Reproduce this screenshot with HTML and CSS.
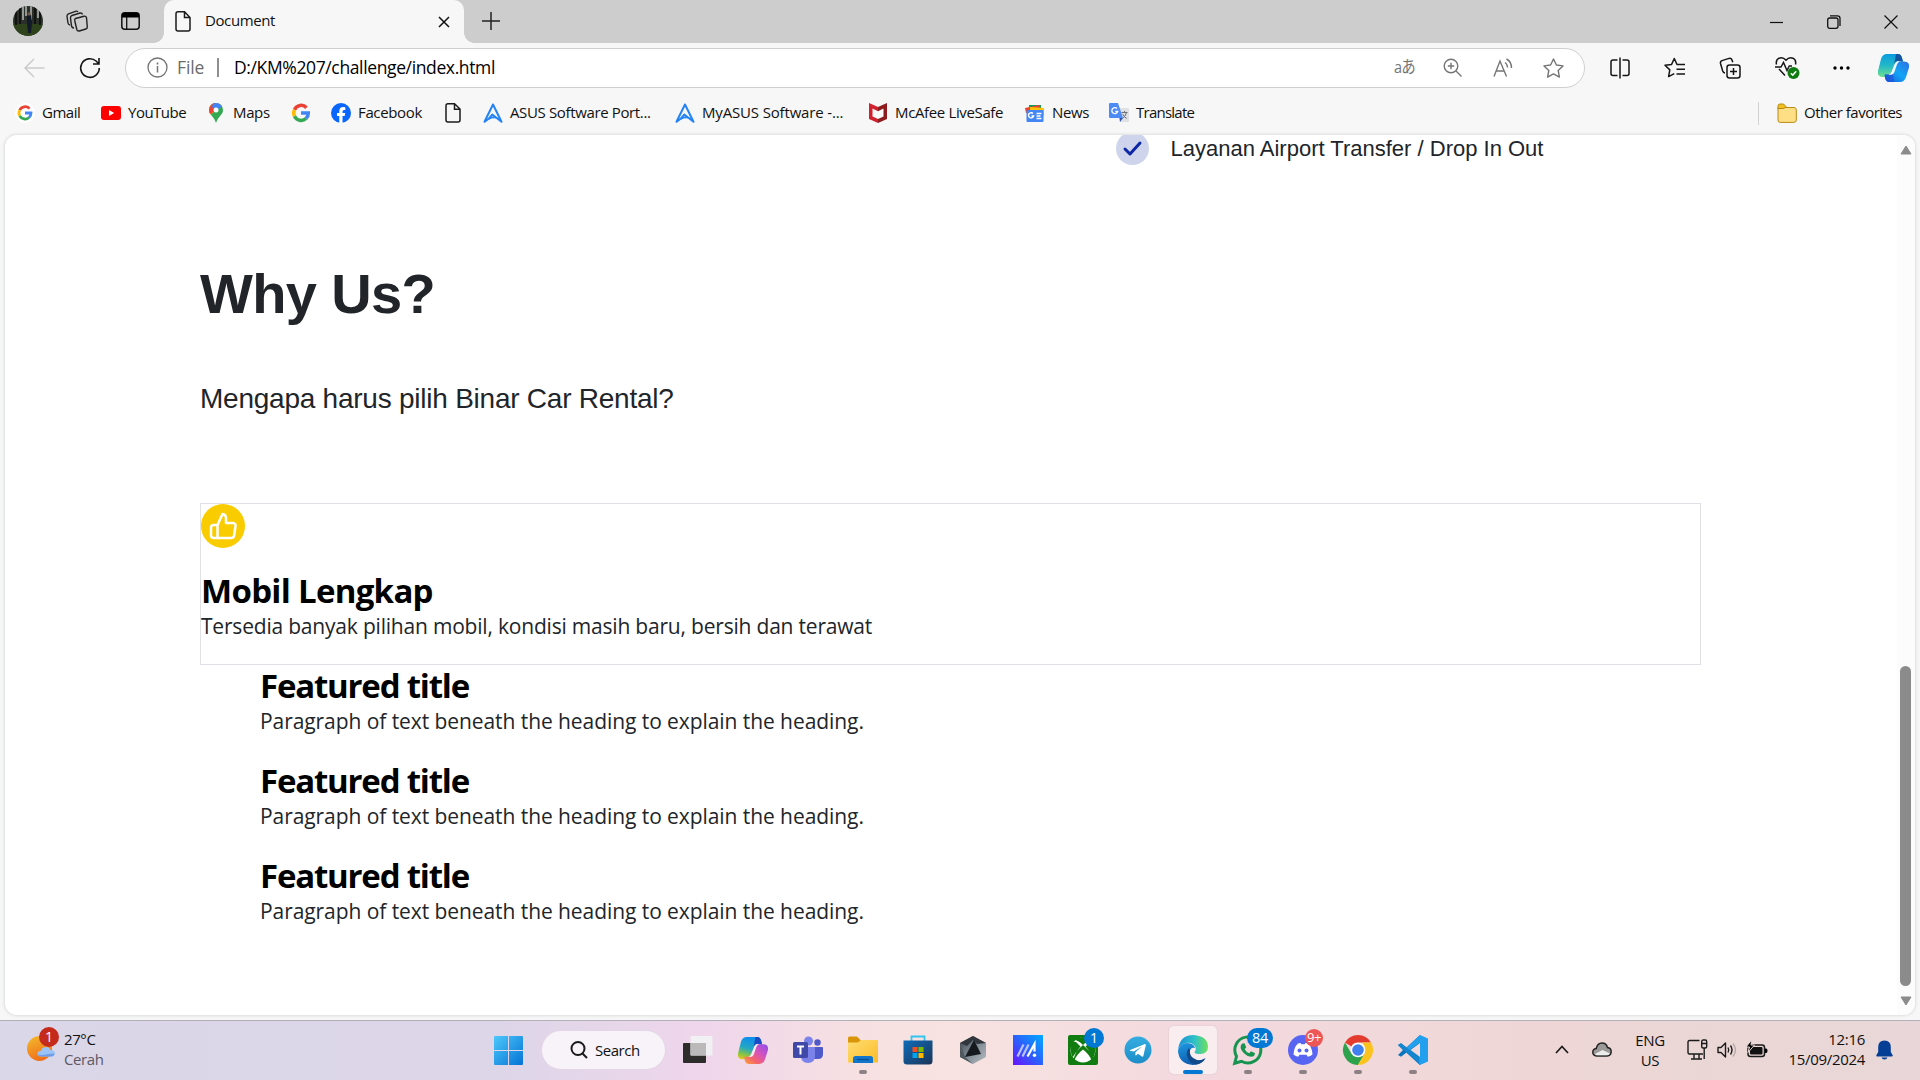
FILE: index.html
```html
<!DOCTYPE html>
<html lang="en">
<head>
<meta charset="utf-8">
<title>Document</title>
<link rel="stylesheet" href="styles.css">
</head>
<body>
<svg class="defs" width="0" height="0">
  <defs>
    <linearGradient id="cpA" x1="0" y1="0" x2="0" y2="1"><stop offset="0" stop-color="#0a9ce0"/><stop offset=".5" stop-color="#22b8c8"/><stop offset="1" stop-color="#6fe08c"/></linearGradient>
    <linearGradient id="cpB" x1="1" y1="0" x2="0" y2="1"><stop offset="0" stop-color="#2f6fe0"/><stop offset=".5" stop-color="#12a5f5"/><stop offset="1" stop-color="#1b54dc"/></linearGradient>
    <linearGradient id="cqA" x1=".3" y1="0" x2="0" y2="1"><stop offset="0" stop-color="#0f8fea"/><stop offset=".45" stop-color="#25a9c0"/><stop offset=".75" stop-color="#8bc53f"/><stop offset="1" stop-color="#f4c51d"/></linearGradient>
    <linearGradient id="cqB" x1="1" y1="0" x2="0" y2="1"><stop offset="0" stop-color="#8a4dec"/><stop offset=".4" stop-color="#d453c0"/><stop offset=".7" stop-color="#f5646b"/><stop offset="1" stop-color="#fba93a"/></linearGradient>
    <linearGradient id="winG" x1="0" y1="0" x2="1" y2="1"><stop offset="0" stop-color="#4cc8fb"/><stop offset="1" stop-color="#0573d5"/></linearGradient>
    <linearGradient id="sunG" x1="0" y1="0" x2=".4" y2="1"><stop offset="0" stop-color="#f3bd2c"/><stop offset="1" stop-color="#f0701a"/></linearGradient>
    <linearGradient id="folG" x1="0" y1="0" x2="1" y2="1"><stop offset="0" stop-color="#ffdd72"/><stop offset="1" stop-color="#fbbc28"/></linearGradient>
    <linearGradient id="stoG" x1="0" y1="0" x2="1" y2="1"><stop offset="0" stop-color="#0f6cb8"/><stop offset="1" stop-color="#1b3458"/></linearGradient>
    <linearGradient id="asuG" x1="0" y1="1" x2="1" y2="0"><stop offset="0" stop-color="#6a12ff"/><stop offset=".5" stop-color="#2b62ff"/><stop offset="1" stop-color="#00aaff"/></linearGradient>
    <linearGradient id="telG" x1="0" y1="0" x2="0" y2="1"><stop offset="0" stop-color="#36ade1"/><stop offset="1" stop-color="#1c8dc8"/></linearGradient>
    <linearGradient id="edG1" x1="0" y1="0" x2="1" y2="0"><stop offset="0" stop-color="#1b8fd6"/><stop offset=".55" stop-color="#2fc0c8"/><stop offset="1" stop-color="#6fe05a"/></linearGradient>
    <linearGradient id="edG2" x1="0" y1="0" x2=".4" y2="1"><stop offset="0" stop-color="#1e9ae2"/><stop offset="1" stop-color="#0f5cae"/></linearGradient>
    <linearGradient id="hexG" x1="0" y1="0" x2="1" y2="1"><stop offset="0" stop-color="#3a4148"/><stop offset=".5" stop-color="#7f8a93"/><stop offset="1" stop-color="#b9bfc4"/></linearGradient>
  </defs>
</svg>

<div class="screen">
  <header class="titlebar">
    <div class="title-left">
      <svg class="avatar" width="30" height="30" viewBox="0 0 30 30"><clipPath id="av"><circle cx="15" cy="15" r="15"/></clipPath><g clip-path="url(#av)"><rect width="30" height="30" fill="#2b2f29"/><path d="M0 18h30v12H0z" fill="#2e431b"/><path d="M3 0v19M7 2v16M22 0v18M27 2v17" stroke="#11130f" stroke-width="2"/><path d="M10 0v14M13 0v10M18 0v14M25 0v12" stroke="#b9bdb9" stroke-width="1.500"/><path d="M14 9h4l1 8-1 10h-3l-1-10z" fill="#111a26"/><circle cx="16" cy="8" r="1.700" fill="#6e5747"/></g></svg>
      <svg class="workspaces" width="22" height="22" viewBox="0 0 22 22" fill="none" stroke="#222" stroke-width="1.400"><path d="M9.500 8.500l8.500-2.300q2-.4 2.500 1.500l.8 9q.1 1.800-1.500 2.300l-6.500 2q-2 .4-2.500-1.500L8.800 11Q8.300 9 9.500 8.500z"/><path d="M8 18q-2 0-2.500-2L4.500 8q-.2-2 1.500-2.500l8-2.500q2-.3 2.500 1.500M4 15q-1.700-.3-2-2L1 6.500Q.8 4.500 2.500 3.800l7-2.500Q11 .8 12 1.800"/></svg>
      <svg class="tabactions" width="19" height="18" viewBox="0 0 19 18"><rect x=".8" y=".8" width="17.400" height="16.400" rx="3" fill="none" stroke="#111" stroke-width="1.500"/><path d="M1 5.500V3q0-2.300 2.500-2.300h12Q18 .7 18 3v2.500z"/><path d="M5.700 5v12" stroke="#111" stroke-width="1.300"/></svg>
    </div>
    <div class="tab">
      <svg width="16" height="21" viewBox="0 0 16 21" fill="none" stroke="#1b1b1b" stroke-width="1.500"><path d="M3 .8h6.500L15 6.500V18q0 2-2 2H3q-2 0-2-2V2.800q0-2 2-2zM9.500 1v5.500H15"/></svg>
      <span class="tab-name">Document</span>
      <svg width="12" height="12" viewBox="0 0 12 12" stroke="#111" stroke-width="1.500"><path d="M1 1l10 10M11 1L1 11"/></svg>
    </div>
    <svg class="newtab" width="18" height="18" viewBox="0 0 18 18" stroke="#222" stroke-width="1.500"><path d="M9 0v18M0 9h18"/></svg>
    <div class="wincontrols">
      <svg width="14" height="14" viewBox="0 0 14 14" stroke="#111" stroke-width="1.200"><path d="M0 7.500h13"/></svg>
      <svg width="14" height="14" viewBox="0 0 14 14" fill="none" stroke="#111" stroke-width="1.300"><rect x=".7" y="3" width="10.300" height="10.300" rx="2"/><path d="M3 .8h7.500Q13 .8 13 3.300V11"/></svg>
      <svg width="14" height="14" viewBox="0 0 14 14" stroke="#111" stroke-width="1.200"><path d="M.5.500l13 13M13.500.500l-13 13"/></svg>
    </div>
  </header>

  <div class="toolbar">
    <svg class="back" width="21" height="20" viewBox="0 0 21 20" fill="none" stroke="#cbcbcb" stroke-width="1.500"><path d="M20.500 10H1.500M10 1L1 10l9 9"/></svg>
    <svg class="reload" width="22" height="22" viewBox="0 0 22 22" fill="none" stroke="#161616" stroke-width="1.600"><path d="M20.300 11a9.300 9.300 0 1 1-3.200-7l2.600 2.700M20 1v6h-6"/></svg>
    <div class="address">
      <svg width="21" height="21" viewBox="0 0 21 21" fill="none" stroke="#757575" stroke-width="1.300"><circle cx="10.500" cy="10.500" r="9.500"/><path d="M10.500 9v6.500" stroke-width="1.500"/><path d="M10.500 5.500v2" stroke-width="1.700"/></svg>
      <span class="scheme">File</span>
      <span class="bar"></span>
      <span class="url">D:/KM%207/challenge/index.html</span>
      <div class="address-icons">
        <span class="translate-ic">aあ</span>
        <svg width="20" height="20" viewBox="0 0 20 20" fill="none" stroke="#757575" stroke-width="1.400"><circle cx="8" cy="8" r="6.800"/><path d="M13 13l5.500 5.500M8 4.800v6.400M4.800 8h6.400"/></svg>
        <svg width="20" height="20" viewBox="0 0 20 20" fill="none" stroke="#757575" stroke-width="1.400"><path d="M1 18.500L7 3l6.500 15.500M3.300 13h8M12 4.500q2.300 1.300 2.500 5M13.500 1q5 2.500 5 9"/></svg>
        <svg width="21" height="20" viewBox="0 0 21 20" fill="none" stroke="#757575" stroke-width="1.400" stroke-linejoin="round"><path d="M10.500 1l2.900 6 6.600.9-4.800 4.600 1.200 6.600-5.900-3.200-5.900 3.200 1.200-6.600L1 7.900 7.600 7z"/></svg>
      </div>
    </div>
    <div class="tools">
      <svg width="20" height="22" viewBox="0 0 20 22" fill="none" stroke="#161616" stroke-width="1.500"><path d="M10 .5v21M7.500 3H3Q1 3 1 5v11.500q0 2 2 2h4.500M12.500 3H17q2 0 2 2v11.500q0 2-2 2h-4.500"/></svg>
      <svg width="22" height="22" viewBox="0 0 22 22" fill="none" stroke="#161616" stroke-width="1.500" stroke-linejoin="round"><path d="M14 7.500h-1L10.300 1.500 7.600 7.400 1 8.300l4.800 4.600-1.200 6.700 5.700-3M13.500 7.500H21M12.500 12.300H21M12.500 17H21"/></svg>
      <svg width="22" height="22" viewBox="0 0 22 22" fill="none" stroke="#161616" stroke-width="1.500"><rect x="8" y="8" width="13" height="13" rx="2.500"/><path d="M14.500 11v7M11 14.500h7M6 16q-1.700-.2-2.300-2L1.500 6.500Q1 4.300 3 3.600l7-2.200q2.300-.5 3 1.600l.8 2.300"/></svg>
      <svg width="25" height="24" viewBox="0 0 25 24" fill="none" stroke="#161616" stroke-width="1.500"><path d="M1.500 8.500q-1-4.500 2.500-6.300 4-1.600 7 2 3-3.600 7-2 3.500 1.800 2.500 6.300M4 13l6 6.500M0 11h6l2.500-4.500 3.500 8 2.300-4.500H17"/><circle cx="18.500" cy="17" r="6" fill="#0f7b10" stroke="none"/><path d="M15.800 17.200l2 1.900 3.400-3.800" stroke="#fff"/></svg>
      <svg width="17" height="4" viewBox="0 0 17 4"><circle cx="2" cy="2" r="1.700"/><circle cx="8.500" cy="2" r="1.700"/><circle cx="15" cy="2" r="1.700"/></svg>
      <svg width="31" height="28" viewBox="0 0 31 28"><path d="M9 0h11q3 0 4 4l1 3h-4q-3 0-4 4l-3 9q-1 3-4 3H5q-6 0-5-6L3 5q1.500-5 6-5z" fill="url(#cpA)"/><path d="M18 0h2q3 0 4 4l1 4-5-1q-3 0-4 4z" fill="#15559f"/><path d="M22 28H11q-3 0-4-4l-.5-3.500H10q3 0 4-4l3-6q1-3 4-3h5q6 0 5 6l-3 9.500q-1.500 5-6 5z" fill="url(#cpB)"/><path d="M7 20.500h3q3 0 4-4l.5-1.500L16 28h-5q-3 0-4-4z" fill="#1c50d6" opacity=".6"/><path d="M18.300 8q1.500-1 3.200-.5-2 1-2.700 3.500l-2.600 7.500q-.7 2-3 2.300h-2.700q2.300-.8 3.200-3.500l2.600-6.500q.7-2 2-2.800z" fill="#f4f9fb"/></svg>
    </div>
  </div>

  <nav class="bookmarks">
    <a class="bm w-gmail"><svg width="20" height="20" viewBox="0 0 20 20"><circle cx="10" cy="10" r="10" fill="#fff"/><g fill="none" stroke-width="2.800"><path d="M14.500 5.600A6 6 0 0 0 4.700 7.200" stroke="#ea4335"/><path d="M4.700 7.200a6 6 0 0 0 0 5.600" stroke="#fbbc05"/><path d="M4.700 12.800a6 6 0 0 0 9.300 1.700" stroke="#34a853"/><path d="M14 14.500a6 6 0 0 0 2-4.500h-6" stroke="#4285f4"/></g></svg><span class="tight">Gmail</span></a>
    <a class="bm w-yt"><svg width="20" height="20" viewBox="0 0 20 20"><rect y="3" width="20" height="14" rx="3" fill="#f00"/><path d="M8 7l5.200 3L8 13z" fill="#fff"/></svg><span class="tight">YouTube</span></a>
    <a class="bm w-maps"><svg width="20" height="20" viewBox="0 0 20 20"><clipPath id="pin"><path d="M10 0a6.800 6.800 0 0 1 7 7c0 5-5 6-7 13C8 13 3 12 3 7a6.800 6.800 0 0 1 7-7z"/></clipPath><g clip-path="url(#pin)"><path d="M0 0h20v20H0z" fill="#34a853"/><path d="M2 14L18 0H0v14z" fill="#fbbc04"/><path d="M0 0h10v7L5 11 0 9z" fill="#ea4335"/><path d="M7 0h13L10 8 6 4z" fill="#4285f4"/></g><circle cx="10" cy="7" r="2.500" fill="#fff"/></svg><span>Maps</span></a>
    <a class="bm w-g"><svg width="20" height="20" viewBox="0 0 20 20" fill="none" stroke-width="3.500"><path d="M15.500 4.700A7.300 7.300 0 0 0 3.500 6.700" stroke="#ea4335"/><path d="M3.500 6.700a7.300 7.300 0 0 0 0 6.600" stroke="#fbbc05"/><path d="M3.500 13.300a7.300 7.300 0 0 0 11.500 2.200" stroke="#34a853"/><path d="M15 15.500a7.300 7.300 0 0 0 2.300-5.500H10" stroke="#4285f4"/></svg></a>
    <a class="bm w-fb"><svg width="20" height="20" viewBox="0 0 20 20"><circle cx="10" cy="10" r="10" fill="#0866ff"/><path d="M8.300 20v-7H6v-3h2.300V8.300Q8.300 4 12.300 4q1 0 2 .2V7h-1.300q-1.500 0-1.500 1.500V10h2.700l-.5 3h-2.200v7z" fill="#fff"/></svg><span>Facebook</span></a>
    <a class="bm w-file"><svg width="20" height="20" viewBox="0 0 16 20" fill="none" stroke="#1b1b1b" stroke-width="1.500"><path d="M3 .8h6.500L15 6v11q0 2-2 2H3q-2 0-2-2V2.800q0-2 2-2zM9.500 1v5.200H15"/></svg></a>
    <a class="bm w-asus"><svg width="20" height="20" viewBox="0 0 20 20" fill="none" stroke="#2583f5" stroke-width="2" stroke-linejoin="round"><path d="M10 1.500L1.500 18.800q5-2.800 7.800-7.300l9.200 7.300z"/><path d="M5.500 15.800q4.500-2.300 7.500-1.200"/></svg><span>ASUS Software Port...</span></a>
    <a class="bm w-myasus"><svg width="20" height="20" viewBox="0 0 20 20" fill="none" stroke="#2583f5" stroke-width="2" stroke-linejoin="round"><path d="M10 1.500L1.500 18.800q5-2.800 7.800-7.300l9.200 7.300z"/><path d="M5.500 15.800q4.500-2.300 7.500-1.200"/></svg><span class="loose">MyASUS Software -...</span></a>
    <a class="bm w-mcafee"><svg width="20" height="20" viewBox="0 0 20 20"><path d="M1 0l9 4v16l-9-4z" fill="#d2202f"/><path d="M19 0l-9 4v16l9-4z" fill="#8e1b1e"/><path d="M4.500 5.500L10 8.200l5.500-2.700v8L10 16l-5.500-2.500z" fill="#fafafa"/></svg><span>McAfee LiveSafe</span></a>
    <a class="bm w-news"><svg width="20" height="20" viewBox="0 0 20 20"><path d="M4 2h12v8H4z" fill="#0c9d58"/><path d="M0 5l14-3 2 8H1z" fill="#ea4335"/><path d="M5 4l14 1v8H5z" fill="#ffc107"/><rect x="1.500" y="7" width="17" height="12" rx="1" fill="#4285f4"/><path d="M8 10.500a2.600 2.600 0 1 0 .6 2.500H6.500M11.500 10.500h5M11.500 13h4M11.500 15.500h5" fill="none" stroke="#fff" stroke-width="1.400"/></svg><span>News</span></a>
    <a class="bm w-tr"><svg width="20" height="20" viewBox="0 0 20 20"><path d="M8 5h11q1 0 1 1v12q0 1-1 1h-8z" fill="#dfe1e5"/><path d="M1 0h8l5 15H1q-1 0-1-1V1q0-1 1-1z" fill="#4c8bf5"/><path d="M10.500 15H14l-3 4z" fill="#3155b5"/><path d="M8 5.500a3 3 0 1 0 .7 3H6.300" fill="none" stroke="#fff" stroke-width="1.300"/><path d="M12.500 9.500h6M15.500 8v1.500M17.500 9.500q-1 4-4 6M13.700 11q1.500 3 4 4.500" fill="none" stroke="#6b7076"/></svg><span class="tighter">Translate</span></a>
    <a class="bm other"><svg width="20" height="20" viewBox="0 0 20 20" stroke="#b98a12"><path d="M1 4.500h16q2.300 0 2.300 2.500v10q0 2.400-2.500 2.400H3.200Q1 19.400 1 17z" fill="#ffdf85"/><path d="M1 6V3Q1 1 3 1h3.500L9 3.500q-1 2-3 2H1z" fill="#f0c020"/></svg><span class="tight">Other favorites</span></a>
  </nav>

  <main class="page">
    <div class="content">
      <div class="service">
        <svg width="33" height="33" viewBox="0 0 33 33"><circle cx="16.500" cy="16.500" r="16.500" fill="#cfd4ed"/><path d="M9 17l5 5 10-11" fill="none" stroke="#0d28a6" stroke-width="3" stroke-linecap="round" stroke-linejoin="round"/></svg>
        <span>Layanan Airport Transfer / Drop In Out</span>
      </div>
      <h1 class="why">Why Us?</h1>
      <p class="lead">Mengapa harus pilih Binar Car Rental?</p>
      <section class="card">
        <svg width="44" height="44" viewBox="0 0 44 44"><circle cx="22" cy="22" r="22" fill="#f9cc00"/><path d="M16.500 21l5-11q3.500.5 3.500 4v5h7q3 .3 2.500 3.200l-1.400 9.300q-.4 2.500-3 2.500H16.500zm0 13H12.800Q10 34 10 31.300V23.700Q10 21 12.800 21h3.700" fill="none" stroke="#fff" stroke-width="2.500" stroke-linejoin="round"/></svg>
        <h3 class="card-title">Mobil Lengkap</h3>
        <p class="card-text">Tersedia banyak pilihan mobil, kondisi masih baru, bersih dan terawat</p>
      </section>
      <section class="feature"><h3>Featured title</h3><p>Paragraph of text beneath the heading to explain the heading.</p></section>
      <section class="feature"><h3>Featured title</h3><p>Paragraph of text beneath the heading to explain the heading.</p></section>
      <section class="feature"><h3>Featured title</h3><p>Paragraph of text beneath the heading to explain the heading.</p></section>
    </div>
    <div class="scrollbar">
      <svg width="12" height="10" viewBox="0 0 12 10"><path d="M6 1l5 8H1z" fill="#8b8b8b" stroke="#8b8b8b" stroke-linejoin="round"/></svg>
      <div class="thumb"></div>
      <svg width="12" height="10" viewBox="0 0 12 10"><path d="M6 9l5-8H1z" fill="#8b8b8b" stroke="#8b8b8b" stroke-linejoin="round"/></svg>
    </div>
  </main>

  <footer class="taskbar">
    <div class="weather">
      <div class="weather-ic">
        <svg width="28" height="26" viewBox="0 0 28 26"><circle cx="12.500" cy="12.500" r="12.500" fill="url(#sunG)"/><path d="M14 20.500q-4-.3-3.500-3.300.5-2.500 3.500-2.500 1-3.700 5-3.700 3.500 0 4.500 3 4 0 4.500 3 .2 3-3.500 3.500z" fill="#9cc3f7"/><path d="M11 18q2 1.500 6 .8t10.500-1.300q-.3 2.500-3 3H14q-2.500-.2-3-2.500z" fill="#6f9de8"/></svg>
        <span class="badge red">1</span>
      </div>
      <div class="weather-text"><span>27°C</span><span class="dim">Cerah</span></div>
    </div>
    <div class="apps">
      <div class="app start"><svg width="29" height="29" viewBox="0 0 29 29" fill="url(#winG)"><path d="M1 0h13v14H0V1q0-1 1-1zM15 0h13q1 0 1 1v13H15zM0 15h14v14H1q-1 0-1-1zM15 15h14v13q0 1-1 1H15z"/></svg></div>
      <div class="search"><svg width="18" height="18" viewBox="0 0 18 18" fill="none" stroke="#1b1b1b" stroke-width="2"><circle cx="8" cy="7.500" r="6.500"/><path d="M12.500 12.500L17 17"/></svg><span>Search</span></div>
      <div class="app"><svg width="30" height="30" viewBox="0 0 30 30"><rect y="8" width="23" height="20" rx="1" fill="#2e2c2b"/><rect x="7.500" y="1" width="22" height="19.500" rx="1" fill="#f1f0f2"/><path d="M7.500 8H23v12.500H7.500z" fill="#bcb9bb"/></svg></div>
      <div class="app"><svg width="30" height="27" viewBox="0 0 31 28"><path d="M9 0h11q3 0 4 4l1 3h-4q-3 0-4 4l-3 9q-1 3-4 3H5q-6 0-5-6L3 5q1.500-5 6-5z" fill="url(#cqA)"/><path d="M18 0h2q3 0 4 4l1 4-5-1q-3 0-4 4z" fill="#1a4bc4"/><path d="M22 28H11q-3 0-4-4l-.5-3.500H10q3 0 4-4l3-6q1-3 4-3h5q6 0 5 6l-3 9.500q-1.500 5-6 5z" fill="url(#cqB)"/><path d="M18.300 8q1.500-1 3.200-.5-2 1-2.700 3.500l-2.600 7.500q-.7 2-3 2.300h-2.700q2.300-.8 3.200-3.500l2.600-6.500q.7-2 2-2.800z" fill="#f6eaf5"/></svg></div>
      <div class="app"><svg width="30" height="28" viewBox="0 0 30 28"><circle cx="15.500" cy="5" r="4.500" fill="#7b83eb"/><circle cx="24.500" cy="6.500" r="3.200" fill="#5059c9"/><path d="M20 11h9q1 0 1 1v6q0 5-5 5h-5z" fill="#5059c9"/><path d="M8 11h14v9q0 7-7 7t-7-7z" fill="#7b83eb"/><rect y="6" width="15" height="16" rx="1.500" fill="#4149a8"/><path d="M4 10.500h7M7.500 10.500v8" stroke="#fff" stroke-width="2"/></svg></div>
      <div class="app"><svg width="30" height="28" viewBox="0 0 30 28"><path d="M0 2q0-1.500 1.500-1.500H9L12.500 4 29 4.500V14H0z" fill="#d9960a"/><path d="M0 6.500h10L13 4h16q1 0 1 1v21.500H0z" fill="url(#folG)"/><path d="M5 27v-4.500q0-2.500 2.500-2.500h15q2.500 0 2.500 2.500V27z" fill="#1276cc"/><path d="M9 23.500h12" stroke="#0b4f92" stroke-width="1.300"/></svg><i class="run"></i></div>
      <div class="app"><svg width="30" height="30" viewBox="0 0 30 30"><path d="M8.500 6V1.500h13V6" fill="none" stroke="#32c5f2" stroke-width="1.800"/><path d="M.5 5.500h29V26q0 3.500-3.500 3.500H4Q.5 29.500.5 26z" fill="url(#stoG)"/><path d="M9.500 12h5v5h-5z" fill="#f25022"/><path d="M15.500 12h5v5h-5z" fill="#7fba00"/><path d="M9.500 18h5v5h-5z" fill="#00a4ef"/><path d="M15.500 18h5v5h-5z" fill="#ffb900"/></svg></div>
      <div class="app"><svg width="28" height="30" viewBox="0 0 28 30"><path d="M14 1l13 7v14l-13 7L1 22V8z" fill="url(#hexG)"/><path d="M14 1l13 7-9 1-4-4-6 6-7-3z" fill="#30363c"/><path d="M15 5l7 14-16 3z" fill="#16191d"/><path d="M1 8l5 14 8 7-13-7z" fill="#4f575f"/></svg></div>
      <div class="app"><svg width="30" height="30" viewBox="0 0 30 30"><path d="M0 0h30v30H0z" fill="url(#asuG)"/><path d="M4.500 21.500L10.500 9.500M9.500 21.500l6-12" fill="none" stroke="#b9c2ff" stroke-width="2.200"/><path d="M14.500 21.500l7-12.500v7.500" fill="none" stroke="#fff" stroke-width="2.200"/><circle cx="21.500" cy="20.300" r="1.700" fill="#fff"/></svg></div>
      <div class="app"><svg width="30" height="30" viewBox="0 0 30 30"><rect width="30" height="30" rx="2" fill="#107c10"/><circle cx="15" cy="15" r="12.500" fill="#fff"/><path d="M6 5q4 0 9 5 5-5 9-5-4-3-9-3T6 5zM5.500 24Q8 16 12.500 11.500L8 7l-3-.5Q2 10 2.500 15T5.500 24zM24.500 24Q22 16 17.500 11.500L22 7l3-.5q3 3.500 2.500 8.500T24.500 24zM15 10q8 7 11 14l-2 2Q21 19 15 14.500 9 19 6 26l-2-2Q7 17 15 10z" fill="#107c10"/></svg><span class="badge blue one">1</span></div>
      <div class="app"><svg width="28" height="28" viewBox="0 0 28 28"><circle cx="14" cy="14" r="13.500" fill="url(#telG)"/><path d="M6 14l15-6q1 0 .8 1.200L19.300 20q-.4 1-1.400.5L14 17.700l-2 1.800-.6-.3v-3l6.400-5.700-8 5L6 14.800q-.6-.4 0-.8z" fill="#fff"/></svg></div>
      <div class="app active"><svg width="30" height="30" viewBox="0 0 30 30"><path d="M0 16Q1 0 15.500 0 30 1 30 12q-.5 7-7.500 7-6 0-6-2 2-2 1-5Q14 7 8 8 1 9.500 0 16z" fill="url(#edG1)"/><path d="M0 16q2-8 9-8 7 .5 8 5-5-1-5.500 5 1 7 8 7.500 4 0 8-2.500Q23 30 15 30 1 29 0 16z" fill="url(#edG2)"/><path d="M11 13q-3 3-2 8 2 7.500 9 8.500 6-.5 9.500-6-4 2.500-8.500 1.500Q10.500 22 12 15z" fill="#114a8b"/></svg><i class="run current"></i></div>
      <div class="app"><svg width="30" height="30" viewBox="0 0 30 30" fill="none" stroke="#17944f"><path d="M1.700 28.300l1.800-7a13 13 0 1 1 5 5z" stroke-width="3"/><path d="M9.500 8.500l2-.3 1.700 4-1.500 2q1.500 3 4.600 4l1.700-2 4 2q-.3 3.500-4 3.500-4-.3-7-3.500-4-4-3.300-7 .3-2 1.800-2.700z" fill="#17944f" stroke="none"/></svg><i class="run"></i><span class="badge blue two">84</span></div>
      <div class="app"><svg width="30" height="30" viewBox="0 0 30 30"><circle cx="15" cy="15" r="15" fill="#5865f2"/><path d="M10 8.500l2.500-.5.800 1.300h3.400l.8-1.300 2.500.5q4 3.500 4.500 11-2 1.800-4.700 2.300l-1.300-2h-7l-1.300 2q-2.700-.5-4.700-2.300.5-7.500 4.500-11z" fill="#fff"/><circle cx="11.500" cy="15.500" r="2" fill="#5865f2"/><circle cx="18.500" cy="15.500" r="2" fill="#5865f2"/></svg><i class="run"></i><span class="badge coral">9+</span></div>
      <div class="app"><svg width="30" height="30" viewBox="0 0 30 30"><path d="M2 7.500a15 15 0 0 1 26 0H15q-5 0-6.500 4z" fill="#e33b2e"/><path d="M2 7.500A15 15 0 0 0 15 30l6.500-11.300Q15 24 8.500 18.700z" fill="#2da14c"/><path d="M28 7.500A15 15 0 0 1 15 30l6.500-11.300Q23.500 12 19 7.500z" fill="#fcc31e"/><circle cx="15" cy="15" r="7.300" fill="#fff"/><circle cx="15" cy="15" r="5.800" fill="#3f7ff0"/></svg><i class="run"></i></div>
      <div class="app"><svg width="30" height="30" viewBox="0 0 30 30"><path d="M22 0L8.500 12.500 3 8.300 0 10l5 5-5 5 3 1.700 5.500-4.200L22 30z" fill="#0b74bd"/><path d="M0 10l3-1.700L22 22.500V30z" fill="#1486cf"/><path d="M22 0l8 3.500v23L22 30l-.8-.5V8L11.500 15l-3-2.500z" fill="#22a0ee"/><path d="M22 8v14l-9.500-7z" fill="#f0dadd"/></svg><i class="run"></i></div>
    </div>
    <div class="tray">
      <svg class="chev" width="14" height="9" viewBox="0 0 14 9" fill="none" stroke="#1b1b1b" stroke-width="1.700"><path d="M1 8l6-6.500L13 8"/></svg>
      <svg class="cloud" width="20" height="15" viewBox="0 0 20 15"><path d="M4.500 14Q.8 13.600.8 10.300.8 7 4.200 6.500 5.500 1 10 1q4.300 0 5.500 4.500 3.700.5 3.700 4.300-.2 3.900-4 4.200z" fill="#9c9999" stroke="#242424" stroke-width="1.500"/><path d="M3 12l7.500-4 7.500 3.500q-1 1.800-3 1.800H5q-1.500 0-2-1.300z" fill="#ededed"/></svg>
      <div class="lang"><span>ENG</span><span>US</span></div>
      <svg class="net" width="21" height="21" viewBox="0 0 21 21" fill="none" stroke="#1b1b1b" stroke-width="1.400"><path d="M12.500 1.500H2.500Q1 1.500 1 3v10.500Q1 15 2.500 15H16M7 15v4.500M12 15v4.500M4 20h11"/><rect x="14.700" y="1" width="5" height="8" rx="1.500"/><path d="M14.700 4.500h5M17.200 9v11"/></svg>
      <svg class="vol" width="21" height="18" viewBox="0 0 21 18" fill="none" stroke="#1b1b1b" stroke-width="1.400"><path d="M1 6.500h3L8.500 2v14L4 11.500H1z" stroke-linejoin="round"/><path d="M11 6.500q1.500 2.500 0 5M13.500 4.500q3 4.500 0 9"/><path d="M16 2.500q5 6.500 0 13" stroke="#b8a9a9"/></svg>
      <svg class="bat" width="21" height="17" viewBox="0 0 21 17"><rect x="1" y="4" width="16.500" height="11.500" rx="2.500" fill="none" stroke="#1b1b1b" stroke-width="1.500"/><rect x="3" y="6" width="12.500" height="7.500" rx="1" fill="#111"/><path d="M18 7.500h1q1.500 0 1.500 2.200T19 12h-1z"/><path d="M4.500-1L-1 6h3.500L1 11.500 7.500 4H4z" stroke="#ecd8d8"/></svg>
      <div class="clock"><span>12:16</span><span>15/09/2024</span></div>
      <svg class="bell" width="17" height="20" viewBox="0 0 17 20" fill="#043f95"><path d="M8.500.5q6.300.3 6.300 6.500v5l1.900 3.300q.3 1-.7 1.200H1q-1-.2-.7-1.200L2.200 12V7Q2.200.8 8.500.5zM5.500 17.500h6q-.7 2-3 2t-3-2z"/></svg>
    </div>
  </footer>
</div>
</body>
</html>
```

FILE: styles.css
```css
* { box-sizing: border-box; }
body { margin: 0; font-family: "Open Sans", "Noto Sans", sans-serif; color: #111; }
h1, h3, p { margin: 0; }
svg { display: block; flex: none; overflow: visible; }
.defs { position: absolute; }
.screen { width: 1920px; height: 1080px; overflow: hidden; display: flex; flex-direction: column; background: #f7f7f7; }

.titlebar { height: 43px; flex: none; display: flex; align-items: center; background: #cdcdcd; }
.title-left { width: 164px; display: flex; align-items: center; padding-left: 13px; height: 43px; }
.title-left svg { margin-bottom: 1px; }
.workspaces { margin-left: 23px; }
.tabactions { margin-left: 33px; }
.tab { width: 300px; height: 43px; padding: 0 14px 0 11px; display: flex; align-items: center; background: #f7f7f7; border-radius: 10px 10px 0 0; position: relative; }
.tab::before, .tab::after { content: ""; position: absolute; bottom: 0; width: 10px; height: 10px; }
.tab::before { left: -10px; background: radial-gradient(circle at 0 0, #cdcdcd 9.5px, #f7f7f7 10px); }
.tab::after { right: -10px; background: radial-gradient(circle at 100% 0, #cdcdcd 9.5px, #f7f7f7 10px); }
.tab-name { flex: 1; margin: 0 0 4px 14px; font-size: 15px; line-height: 20px; letter-spacing: -.4px; }
.newtab { margin: 0 0 2px 18px; }
.wincontrols { margin-left: auto; padding-right: 22px; display: flex; gap: 43px; }

.toolbar { height: 49px; flex: none; display: flex; align-items: center; padding-left: 24px; }
.reload { margin-left: 34px; }
.address { margin-left: 24px; width: 1460px; height: 40px; border: 1px solid #cfcfcf; border-radius: 20px; background: #fff; display: flex; align-items: center; padding: 0 20px 0 21px; font-size: 17.5px; }
.scheme { margin-left: 9px; width: 40px; color: #6b6b6b; letter-spacing: -.12px; padding-bottom: 2px; }
.bar { width: 2px; height: 19px; background: #8f8f8f; }
.url { margin-left: 15px; padding-bottom: 2px; letter-spacing: -.37px; white-space: nowrap; color: #000; }
.address-icons { margin-left: auto; display: flex; align-items: center; gap: 30px; }
.translate-ic { font: 17px/20px "Open Sans", "Noto Sans CJK JP", sans-serif; color: #757575; letter-spacing: -1px; width: 19px; padding-bottom: 1px; white-space: nowrap; transform: scaleX(.85); transform-origin: 0 0; }
.tools { display: flex; align-items: center; margin-left: 25px; gap: 33.5px; }
.tools svg:last-child { margin-left: -6px; }

.bookmarks { height: 43px; flex: none; display: flex; align-items: center; padding: 0 17px 1px 15px; font-size: 15px; letter-spacing: -.36px; }
.bm { display: flex; align-items: center; gap: 7px; white-space: nowrap; line-height: 20px; }
.bm span { padding-bottom: 3px; }
.bm .tight { letter-spacing: -.5px; }
.bm .tighter { letter-spacing: -.75px; }
.bm .loose { letter-spacing: -.16px; }
.w-gmail { width: 86px; }
.w-yt { width: 105px; }
.w-maps { width: 85px; }
.w-g { width: 40px; }
.w-fb { width: 112px; }
.w-file { width: 40px; }
.w-asus { width: 192px; }
.w-myasus { width: 193px; }
.w-mcafee { width: 157px; }
.w-news { width: 84px; }
.w-tr { width: 100px; }
.other { margin-left: auto; border-left: 1px solid #d3d3d3; padding-left: 18px; margin-right: 1px; }

.page { margin: 0 5px; height: 880px; flex: none; display: flex; background: #fff; border-radius: 12px; overflow: hidden; box-shadow: 0 0 3px 1px #dcdee0; color: #212529; }
.content { width: 1697px; padding-left: 195px; margin-top: -3px; }
.service { display: flex; align-items: center; height: 33px; margin-left: 916px; gap: 21.5px; font: 22px/33px "Liberation Sans", Arial, sans-serif; white-space: nowrap; }
.why { margin-top: 95px; font: bold 56px/68px "Liberation Sans", Arial, sans-serif; letter-spacing: -.65px; }
.lead { margin-top: 50px; font: 28px/42px "Liberation Sans", Arial, sans-serif; letter-spacing: -.24px; }
.card { margin-top: 83px; width: 1501px; height: 162px; border: 1px solid #dee2e6; }
.card-title { margin-top: 22px; }
.card-title, .feature h3 { font-size: 33px; line-height: 42px; height: 40px; font-weight: 700; color: #000; letter-spacing: -.7px; }
.card-text, .feature p { font-size: 21px; line-height: 32px; letter-spacing: -.2px; }
.feature { margin-left: 60px; height: 95px; }
.feature h3 { letter-spacing: -1.2px; }
.feature p { line-height: 33px; letter-spacing: -.07px; }
.scrollbar { margin-left: auto; width: 18px; background: #fcfcfc; display: flex; flex-direction: column; align-items: center; padding: 10px 1px 9px 0; }
.thumb { width: 11px; height: 320px; margin: auto 0 10px; border-radius: 6px; background: #8b8b8b; }

.taskbar { margin-top: 5px; height: 60px; flex: none; border-top: 1px solid #b3afb8; display: flex; align-items: center; font-size: 15px; line-height: 20px;
  background: linear-gradient(90deg, #dad7e8 0, #dbd6e8 300px, #ddd6e8 500px, #efd6ec 700px, #f6e0e2 850px, #f8e3e1 950px, #f3d9de 1200px, #f0d8d9 1450px, #efd6d6 1520px, #ead7d5 1700px, #e9d6d8 1920px); }
.weather { width: 484px; padding-left: 27px; display: flex; align-items: center; gap: 9px; }
.weather-ic { position: relative; margin-bottom: 3px; }
.weather-text { display: flex; flex-direction: column; letter-spacing: -.4px; padding-bottom: 3px; }
.dim { color: #5c5965; }
.badge { position: absolute; height: 20px; min-width: 20px; border-radius: 10px; text-align: center; color: #fff; font-size: 14px; line-height: 19px; }
.red { left: 12px; top: -9px; background: #c42b1c; }
.blue { background: #0078d4; top: 2px; }
.one { left: 25px; }
.two { left: 23px; width: 26px; letter-spacing: -.4px; font-size: 14.500px; }
.coral { left: 26px; top: 3px; height: 18px; min-width: 18px; line-height: 17px; font-size: 13px; letter-spacing: -.5px; background: #ee5555; }
.apps { display: flex; align-items: center; gap: 7px; margin-bottom: 1px; }
.app { width: 48px; height: 48px; border-radius: 5px; display: flex; align-items: center; justify-content: center; position: relative; flex: none; }
.start { margin-right: 3px; }
.active { background: #f9edf0; box-shadow: 0 0 1px 1px #ead3d8; }
.run { position: absolute; bottom: 0; left: 20px; width: 8px; height: 4px; border-radius: 2px; background: #8c8084; }
.current { left: 14px; width: 20px; background: #0078d4; }
.search { width: 123px; height: 38px; border-radius: 19px; background: #f7f3f9; box-shadow: 0 0 1px 1px #e5d6e7; display: flex; align-items: center; gap: 7px; padding-left: 28px; letter-spacing: -.46px; margin-right: 2px; }
.search span { padding-bottom: 1px; }
.tray { margin-left: auto; display: flex; align-items: center; padding-right: 27px; letter-spacing: -.3px; }
.chev, .cloud, .net, .vol, .bat, .bell { margin-bottom: 2px; }
.cloud { margin-left: 23px; }
.lang { margin-left: 20px; width: 36px; display: flex; flex-direction: column; align-items: center; padding-bottom: 2px; }
.net { margin-left: 19px; }
.vol { margin-left: 9px; }
.bat { margin-left: 9px; }
.clock { width: 97px; display: flex; flex-direction: column; align-items: flex-end; padding-bottom: 3px; }
.bell { margin-left: 11px; }
```
